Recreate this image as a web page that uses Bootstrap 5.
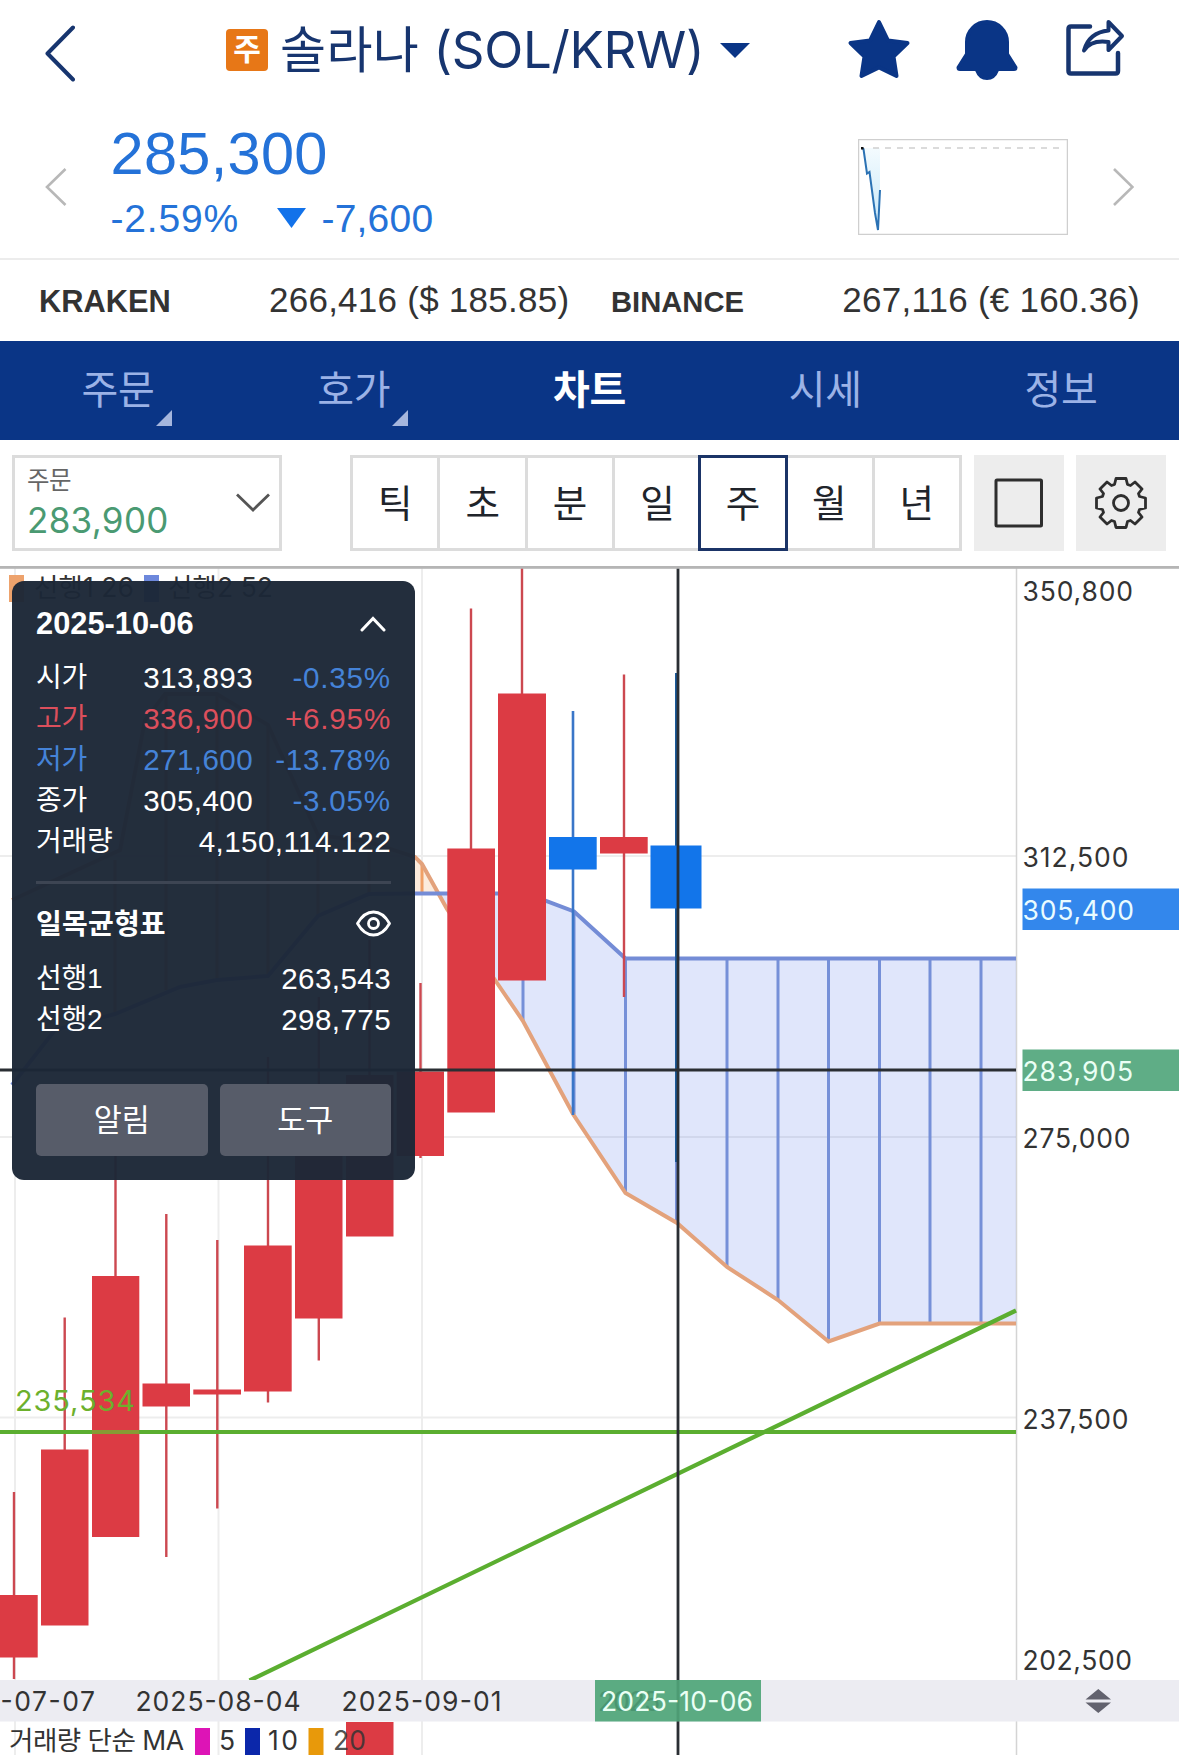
<!DOCTYPE html>
<html lang="ko">
<head>
<meta charset="utf-8">
<meta name="viewport" content="width=device-width, initial-scale=1">
<title>솔라나 (SOL/KRW)</title>
<link href="https://cdn.jsdelivr.net/npm/bootstrap@5.3.0/dist/css/bootstrap.min.css" rel="stylesheet">
<style>
  :root { --navy: #0a3586; --fall: #2472d8; }
  body { width: 1179px; height: 1755px; overflow: hidden; background: #fff; color: #333;
         font-family: "Liberation Sans", "Noto Sans CJK KR", sans-serif; }
  svg { display: block; flex: none; }
  .ui-font { font-family: Inter, "Noto Sans CJK KR", sans-serif; }
  .top-bar { height: 100px; padding: 0 53px 0 45px; }
  .coin-tag { width: 42px; height: 42px; border-radius: 4px; background: #e77717; color: #fff; font-size: 30px; line-height: 40px; font-weight: 700; margin-left: 151px; }
  .coin-title { font-size: 51px; line-height: 60px; color: #17356f; margin-left: 12px; white-space: nowrap; width: 440px; }
  .coin-title .kr { font-size: 50px; letter-spacing: .4px; }
  .coin-title .en { letter-spacing: -.3px; }
  .price-bar { height: 160px; border-bottom: 2px solid #ececec; padding: 0 45px; }
  .price-main { font-size: 59.5px; line-height: 60px; color: var(--fall); margin-top: 24px; letter-spacing: .3px; }
  .price-sub { font-size: 39px; line-height: 44px; color: var(--fall); margin-top: 13px; }
  .price-sub .pct { letter-spacing: .8px; width: 126px; }
  .spark { margin: 39px 44px 0 auto; }
  .exchange-bar { height: 81px; padding: 0 39px; white-space: nowrap; }
  .ex-name { font-weight: 700; font-size: 30.8px; line-height: 36px; padding-top: 3px; }
  .ex-val { font-size: 35px; line-height: 40px; letter-spacing: .25px; padding-bottom: 1px; }
  .menu-bar { height: 99px; background: var(--navy); font-size: 40px; }
  .menu-bar .nav-link { color: #9bb2e6; padding: 0; line-height: 97px; height: 99px; letter-spacing: -.3px; position: relative; }
  .menu-bar .nav-link.active { color: #fff; font-weight: 700; }
  .menu-bar .corner::after { content: ""; position: absolute; left: 156px; top: 69px; border-left: 16px solid transparent; border-bottom: 16px solid #a5b6dd; }
  .tool-bar { height: 126px; padding: 15px 13px 0 12px; }
  .order-pick { width: 270px; height: 96px; border: 3px solid #dcdcdc; padding: 5px 9px 0 12px; }
  .order-pick .cap { font-size: 24.5px; line-height: 34px; color: #666; letter-spacing: -.5px; }
  .order-pick .amt { font-size: 35px; line-height: 40px; color: #4a9a72; margin-top: 3px; letter-spacing: .3px; }
  .period { width: 612px; height: 96px; margin-left: 68px; border: 3px solid #dcdcdc; }
  .period .cell { flex: 1 1 0; text-align: center; font-size: 37.5px; line-height: 92px; color: #20242b; border-right: 3px solid #dcdcdc; }
  .period .cell:last-child { border-right: 0; }
  .period .cell.on { margin: -3px -1px -3px -2px; border: 3px solid #1b3467; flex: 1 1 3px; line-height: 92px; }
  .sq-btn { width: 90px; height: 96px; background: #ededed; margin-left: 12px; }
  .chart-box { height: 1189px; position: relative; }
  .info-pop { position: absolute; left: 12px; top: 15px; width: 403px; height: 599px; border-radius: 12px; background: rgba(28,39,55,.968); color: #fff; padding: 25px 24px 24px; }
  .info-pop .line { height: 41px; line-height: 41px; font-size: 29.6px; letter-spacing: .4px; }
  .info-pop .kr { font-size: 28px; letter-spacing: -.3px; }
  .info-pop .pct { width: 138px; text-align: right; letter-spacing: .8px; }
  .info-pop .up { color: #dc4f5c; }
  .info-pop .dn { color: #4583d8; }
  .info-pop .btn-pop { flex: 1; height: 72px; border: 0; border-radius: 5px; background: #575c69; color: #fff; font-size: 30.5px; line-height: 70px; padding: 0; }
  .rule { height: 3px; background: #3d4553; }
</style>
</head>
<body>

<header class="top-bar d-flex align-items-center ui-font">
  <svg class="mt-2" width="30" height="58" viewBox="0 0 30 58" fill="none" stroke="#17356f" stroke-width="4" stroke-linecap="round" stroke-linejoin="round"><path d="M28 2.500 2.500 28.500 28 54.500"/></svg>
  <span class="coin-tag text-center">주</span>
  <span class="coin-title"><span class="kr">솔라나</span> <span class="en">(SOL/KRW)</span></span>
  <svg width="30" height="15" viewBox="0 0 30 15"><path d="M0 0H30L15 15Z" fill="#0a3586"/></svg>
  <svg class="ms-auto" width="280" height="64" viewBox="846 18 280 64">
    <g fill="#0a3586" stroke="#0a3586" stroke-width="4" stroke-linejoin="round">
      <path d="M879 22 888 40.500 907.500 43 893.500 56.500 896.500 76 879 67.500 861.500 76 864.500 56.500 850.500 43 870 40.500Z"/>
      <path d="M967 68V42a20 20 0 0 1 40 0v12l8.500 13.500q0 1.500-1.500 1.500H960q-1.500 0-1.500-1.500L967 54ZM977 70q3 8 10 8t10-8Z"/>
    </g>
    <g fill="none" stroke="#17356f" stroke-width="4.500" stroke-linejoin="round" stroke-linecap="round">
      <path d="M1090 26.500H1071q-2.500 0-2.500 2.500V71q0 2.500 2.500 2.500H1115.500q2.500 0 2.500-2.500V53"/>
      <path d="M1108.500 22 1122 36 1108.500 50V42Q1091 39.500 1084 50.500 1089 32.500 1108.500 30.500Z" stroke-width="4"/>
    </g>
  </svg>
</header>

<section class="price-bar d-flex">
  <svg width="22" height="40" viewBox="0 0 22 40" style="margin-top:67px" fill="none" stroke="#b8b8b8" stroke-width="2.600"><path d="M20.500 2 2 20 20.500 38"/></svg>
  <div style="margin-left:43.500px">
    <div class="price-main">285,300</div>
    <div class="price-sub d-flex align-items-center"><span class="pct">-2.59%</span>
      <svg width="29" height="20" viewBox="0 0 29 20" style="margin:0 16px 3px 40px"><path d="M0 0H29L14.500 20Z" fill="#1272ea"/></svg><span style="letter-spacing:.200px">-7,600</span></div>
  </div>
  <svg class="spark" width="210" height="96" viewBox="858 139 210 96">
    <defs><linearGradient id="sg" x1="0" y1="0" x2="0" y2="1"><stop offset="0" stop-color="#f4fbfe"/><stop offset="1" stop-color="#c4e6f9"/></linearGradient></defs>
    <rect x="858.500" y="139.500" width="209" height="95" fill="none" stroke="#cfcfcf" stroke-width="1.500"/>
    <path d="M862 148H880V190L878 230 869.500 172 867 173Z" fill="url(#sg)"/>
    <path d="M873 148H1060" stroke="#cfcfcf" stroke-width="1.500" stroke-dasharray="6 6"/>
    <path d="M862 148 863.500 149 867 173.500 869.500 172 875 213 878 230 880 190" fill="none" stroke="#2b72b4" stroke-width="2"/>
    <rect x="861" y="147" width="2.500" height="2.500" fill="#111"/>
  </svg>
  <svg width="22" height="40" viewBox="0 0 22 40" style="margin-top:67px" fill="none" stroke="#b8b8b8" stroke-width="2.600"><path d="M2 2 20.500 20 2 38"/></svg>
</section>

<section class="exchange-bar d-flex align-items-center">
  <span class="ex-name" style="width:230px">KRAKEN</span><span class="ex-val" style="width:342px">266,416 ($ 185.85)</span>
  <span class="ex-name" style="font-size:29.200px">BINANCE</span><span class="ex-val ms-auto">267,116 (€ 160.36)</span>
</section>

<nav class="menu-bar nav nav-justified ui-font flex-nowrap">
  <a class="nav-link nav-item w-100 corner">주문</a><a class="nav-link nav-item w-100 corner">호가</a><a class="nav-link nav-item w-100 active">차트</a><a class="nav-link nav-item w-100">시세</a><a class="nav-link nav-item w-100">정보</a>
</nav>

<section class="tool-bar d-flex ui-font">
  <div class="order-pick d-flex justify-content-between">
    <div><div class="cap">주문</div><div class="amt">283,900</div></div>
    <svg width="34" height="20" viewBox="0 0 34 20" style="margin-top:29px" fill="none" stroke="#555" stroke-width="2.800"><path d="M1 2.500 17 18 33 2.500"/></svg>
  </div>
  <div class="period d-flex">
    <span class="cell">틱</span><span class="cell">초</span><span class="cell">분</span><span class="cell border-end-0">일</span><span class="cell on">주</span><span class="cell">월</span><span class="cell">년</span>
  </div>
  <div class="sq-btn d-flex align-items-center justify-content-center"><svg width="50" height="50" viewBox="0 0 50 50"><rect x="2" y="2" width="45.500" height="46" rx="1" fill="none" stroke="#2e2e2e" stroke-width="3"/></svg></div>
  <div class="sq-btn d-flex align-items-center justify-content-center"><svg width="54" height="54" viewBox="-27 -27 54 54" fill="none" stroke="#2e2e2e" stroke-width="2.800" stroke-linejoin="round">
    <path d="M-5-24.500H5L6.500-18.500 9.500-17.500 14-21 21-14 17.500-9.500 18.500-6.500 24.500-5V5L18.500 6.500 17.500 9.500 21 14 14 21 9.500 17.500 6.500 18.500 5 24.500H-5L-6.500 18.500-9.500 17.500-14 21-21 14-17.500 9.500-18.500 6.500-24.500 5V-5L-18.500-6.500-17.500-9.500-21-14-14-21-9.500-17.500-6.500-18.500Z"/><circle r="7.500"/></svg></div>
</section>

<main class="chart-box ui-font">
  <svg width="1179" height="1189" viewBox="0 566 1179 1189" font-size="26.500" fill="#333">
    <!-- grid -->
    <g stroke="#ededed" stroke-width="2" fill="none">
      <path d="M15 568V1755M218.500 568V1755M422 568V1755M0 856H1016M0 1137H1016M0 1417.500H1016"/>
      <path d="M1016.500 568V1755" stroke="#d4d4d4" stroke-width="1.500"/>
    </g>
    <!-- leading span cloud -->
    <path d="M12 1085 55 1030 115 1014 180 987 217 980 268 976 318 916 369 894 438 893 422 864 369 842 318 835 268 725 217 694 165 694 145 720 120 850 12 900Z" fill="#f09a50" opacity=".2"/>
    <path d="M422 864V893M369 842V894M318 835V916M268 725V976M217 694V980M166 694V990M115 860V1014" stroke="#f0a066" stroke-width="3"/>
    <path d="M438 893H523L546 901 574 911.500 625.500 958.500H1016V1323.500H879.500L828.500 1341.500 778 1300 727 1267 677 1223 625.500 1193 573 1114 523 1021 495 980Z" fill="#5b78e8" opacity=".19"/>
    <path d="M523 893V1021M574 911V1114M625.500 958V1193M676.500 958V1223M727 958V1267M778 958V1300M828.500 958V1341M879.500 958V1323M930 958V1323M981 958V1323" stroke="#7690d8" stroke-width="3"/>
    <g fill="none" stroke-width="4">
      <path d="M12 900 120 850 145 720 165 694H217L268 725 318 835 369 842 415 857 422 864 447 909 495 980 523 1021 573 1114 625.500 1193 677 1223 727 1267 778 1300 828.500 1341.500 879.500 1323.500H1016" stroke="#e3a27c"/>
      <path d="M12 1085 55 1030 115 1014 180 987 217 980 268 976 318 916 369 894 415 893.500H523L546 901 574 911.500 625.500 958.500H1016" stroke="#748cd6"/>
    </g>
    <!-- candles -->
    <g stroke="#cc4850" stroke-width="2.400">
      <path d="M14 1492V1679M64.700 1317.500V1450M115.500 1130V1280M166.300 1214V1557M217.300 1240V1508.500M268 1057V1402.500M318.800 997V1360.500M369.500 940V1080M420.500 983V1158M471 608.500V850M522 568V694M624 674.500V997"/>
    </g>
    <g fill="#dc3b44">
      <path d="M-10 1595H37.700V1657.500H-10ZM41 1449.500H88.500V1625.500H41ZM92 1276H139.300V1537H92ZM142.500 1383.500H190V1406.500H142.500ZM193.300 1389.500H241V1394.500H193.300ZM244 1245.500H291.700V1391.500H244ZM295 1150H342.500V1318.500H295ZM346 1075H393.500V1236.500H346ZM396.700 1071.500H444V1156H396.700ZM447.300 848.500H495V1112.500H447.300ZM498 693.500H546V980.500H498ZM600 837H647.700V853.500H600ZM346 1722H393.500V1755H346Z"/>
    </g>
    <path d="M573 711V1115" stroke="#3a76c8" stroke-width="2.600"/>
    <path d="M676.500 673V1162" stroke="#1a5a9a" stroke-width="3"/>
    <path d="M549 837H596.700V869.500H549ZM650.500 845.500H701.500V908.500H650.500Z" fill="#1275ea"/>
    <!-- drawn trend lines -->
    <path d="M0 1432H1016M249.500 1680.500 1016 1310.500" stroke="#5bae30" stroke-width="4.200" fill="none"/>
    <path d="M92 1432H139" stroke="#879a34" stroke-width="4.200"/>
    <text x="15" y="1411" font-size="29" fill="#6cb02c" textLength="120">235,534</text>
    <!-- price axis -->
    <rect x="1022.500" y="888.500" width="157" height="41.500" fill="#3387ec"/>
    <rect x="1022.500" y="1049.500" width="157" height="41.500" fill="#5fad86"/>
    <g font-size="26.500">
      <text x="1022.500" y="600.500" textLength="110.500">350,800</text>
      <text x="1022.500" y="866.500" textLength="106">312,500</text>
      <text x="1022.500" y="919.500" textLength="111.500" fill="#eafcff">305,400</text>
      <text x="1022.500" y="1080.500" textLength="110.500" fill="#eafff4">283,905</text>
      <text x="1022.500" y="1147.500" textLength="108">275,000</text>
      <text x="1022.500" y="1428.500" textLength="106">237,500</text>
      <text x="1022.500" y="1669.500" textLength="109.500">202,500</text>
    </g>
    <!-- legend -->
    <rect x="9" y="575" width="15" height="27" fill="#eda26c"/><rect x="144" y="575" width="15" height="27" fill="#6d88dc"/>
    <text x="34" y="597" textLength="100">선행1 26</text><text x="168" y="597" textLength="105">선행2 52</text>
    <!-- date axis -->
    <rect x="0" y="1680" width="1179" height="41.500" fill="#ececf2"/>
    <text x="-71" y="1711" textLength="166">2025-07-07</text>
    <text x="135.500" y="1711" textLength="165">2025-08-04</text>
    <text x="341.500" y="1711" textLength="160">2025-09-01</text>
    <path d="M1085.500 1699.500 1098.300 1689 1111 1699.500ZM1085.500 1702.500H1111L1098.300 1713Z" fill="#62626e"/>
    <!-- volume legend -->
    <text x="9" y="1750" textLength="175">거래량 단순 MA</text>
    <rect x="195" y="1728" width="15" height="27" fill="#dd14b6"/><text x="219" y="1750">5</text>
    <rect x="245" y="1728" width="15" height="27" fill="#0b27aa"/><text x="268" y="1750" textLength="30">10</text>
    <rect x="308.500" y="1728" width="15" height="27" fill="#e8990a"/><text x="333" y="1750" textLength="33" fill-opacity=".85">20</text>
    <!-- crosshair -->
    <path d="M678 568V1755M0 1070H1016" stroke="#2a2e33" stroke-width="2.800"/>
    <rect x="595" y="1680" width="166" height="41.500" fill="#5bab82"/>
    <path d="M678 1680V1721" stroke="#4d9b73" stroke-width="2.800"/>
    <text x="598" y="1711" fill="#4a9570" textLength="62">2025</text>
    <text x="601" y="1710.500" fill="#eafff4" textLength="152">2025-10-06</text>
    <rect x="0" y="566" width="1179" height="2.800" fill="#b5b5b5"/>
  </svg>

  <aside class="info-pop" style="font-family:'Liberation Sans','Noto Sans CJK KR',sans-serif">
    <div class="d-flex justify-content-between align-items-center" style="height:36px"><b style="font-size:30.800px;line-height:36px">2025-10-06</b>
      <svg width="26" height="16" viewBox="0 0 26 16" style="margin-right:5px" fill="none" stroke="#fff" stroke-width="3" stroke-linecap="round"><path d="M2 14 13 2.500 24 14"/></svg></div>
    <div style="margin-top:15px">
      <div class="line d-flex"><span class="kr">시가</span><span class="ms-auto">313,893</span><span class="dn pct">-0.35%</span></div>
      <div class="line d-flex up"><span class="kr">고가</span><span class="ms-auto">336,900</span><span class="pct">+6.95%</span></div>
      <div class="line d-flex dn"><span class="kr">저가</span><span class="ms-auto">271,600</span><span class="pct">-13.78%</span></div>
      <div class="line d-flex"><span class="kr">종가</span><span class="ms-auto">305,400</span><span class="dn pct">-3.05%</span></div>
      <div class="line d-flex justify-content-between"><span class="kr">거래량</span><span>4,150,114.122</span></div>
    </div>
    <div class="rule" style="margin-top:19px"></div>
    <div class="d-flex justify-content-between align-items-center" style="height:40px;margin-top:19px"><b class="kr" style="letter-spacing:.200px;padding-top:3px">일목균형표</b>
      <svg width="35" height="27" viewBox="0 0 35 27" fill="none" stroke="#fff" stroke-width="2.800"><path d="M1.500 13.500Q8 2 17.500 2T33.500 13.500Q27 25 17.500 25T1.500 13.500Z" stroke-linejoin="round"/><circle cx="17.500" cy="13.500" r="5"/></svg></div>
    <div style="margin-top:15px">
      <div class="line d-flex justify-content-between"><span class="kr">선행1</span><span>263,543</span></div>
      <div class="line d-flex justify-content-between"><span class="kr">선행2</span><span>298,775</span></div>
    </div>
    <div class="d-flex" style="gap:12px;margin-top:44px"><button class="btn-pop">알림</button><button class="btn-pop">도구</button></div>
  </aside>
</main>

<script src="https://cdn.jsdelivr.net/npm/bootstrap@5.3.0/dist/js/bootstrap.bundle.min.js"></script>
</body>
</html>
